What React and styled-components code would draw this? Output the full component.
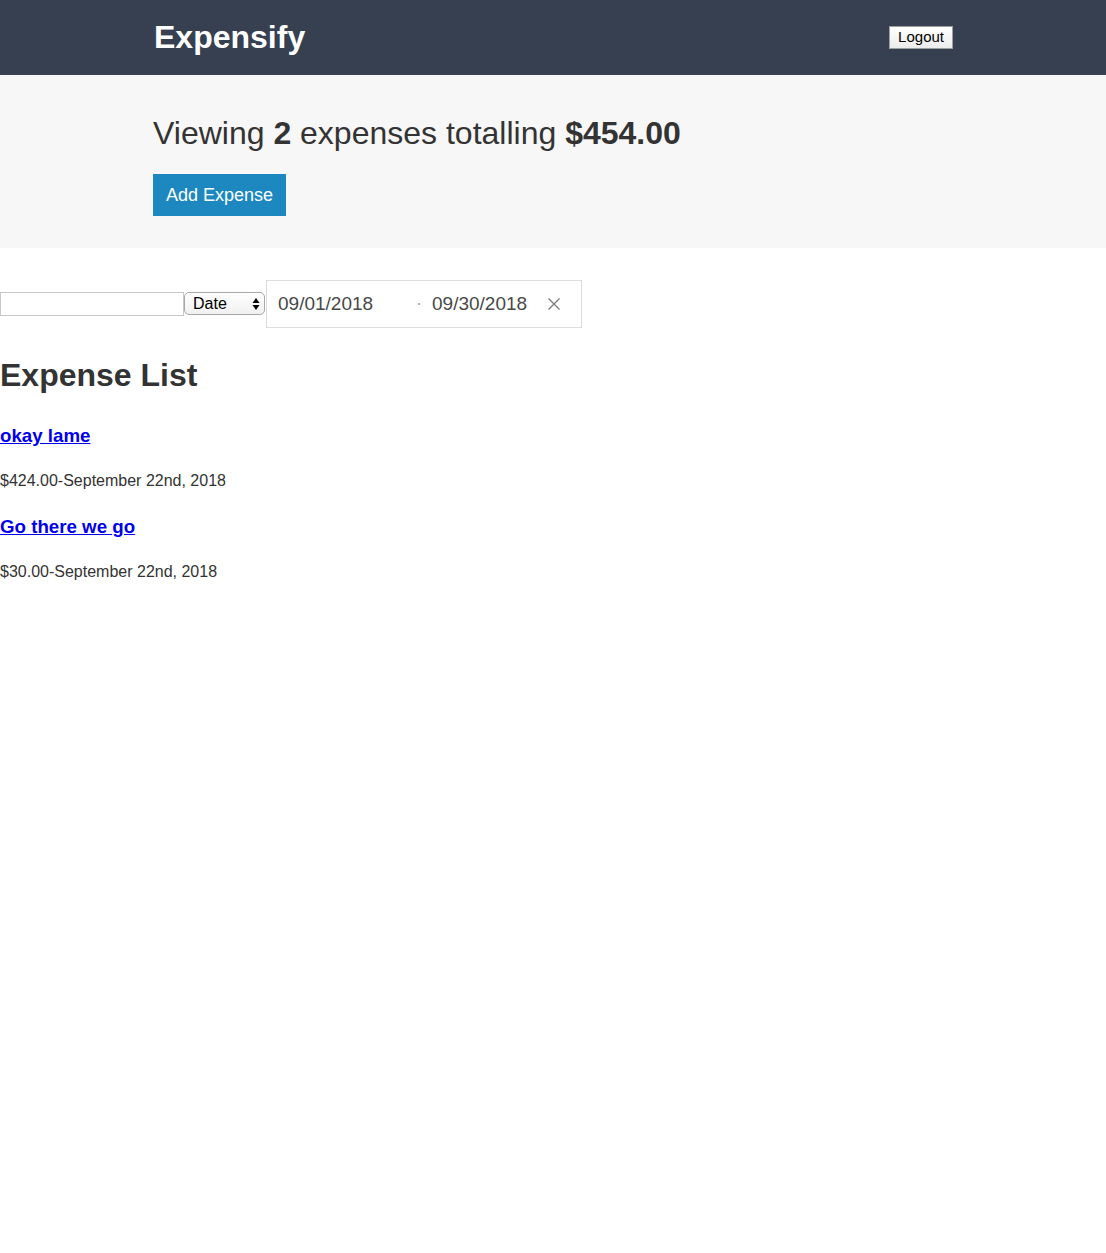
import React from 'react'
import styled, { createGlobalStyle } from 'styled-components'

const GlobalStyle = createGlobalStyle`
  body {
    margin: 0;
    font-family: "Liberation Sans", Arial, sans-serif;
    color: #333333;
    background: #ffffff;
  }
`

const Header = styled.header`
  background: #364051;
`
const Content = styled.div`
  max-width: 800px;
  margin: 0 auto;
`
const HeaderBar = styled(Content)`
  height: 75px;
  display: flex;
  align-items: center;
  justify-content: space-between;
`
const Logo = styled.h1`
  margin: 0 0 0 1px;
  color: #ffffff;
  font-size: 32px;
  font-weight: 700;
  letter-spacing: 0;
`
const LogoutButton = styled.button`
  font-family: "Liberation Sans", Arial, sans-serif;
  font-size: 15px;
  color: #000;
  height: 23px;
  padding: 0 8px 1px;
  border: 1px solid #a0a0a0;
  border-radius: 0;
  background: linear-gradient(#ffffff, #ececec);
  margin-top: -1px;
`

const PageHeader = styled.section`
  background: #f7f7f7;
  padding: 40px 0 32px;
`
const Title = styled.h1`
  margin: 0 0 22px;
  font-size: 32px;
  font-weight: 400;
  line-height: 37px;
  color: #333;
  b {
    font-weight: 700;
  }
`
const PrimaryButton = styled.button`
  font-family: "Liberation Sans", Arial, sans-serif;
  background: #1c88bf;
  color: #ffffff;
  border: none;
  height: 42px;
  padding: 0 13px;
  font-size: 18px;
  display: block;
`

const Filters = styled.div`
  display: flex;
  align-items: center;
  margin-top: 32px;
`
const TextInput = styled.input`
  box-sizing: border-box;
  width: 184px;
  height: 24px;
  margin: -1px 0 0;
  border: 1px solid #c9c9c9;
  padding: 0 4px;
  font-family: "Liberation Sans", Arial, sans-serif;
  font-size: 15px;
`
const Select = styled.select`
  appearance: none;
  box-sizing: border-box;
  width: 81px;
  height: 23px;
  border: 1px solid #a8a8a8;
  border-radius: 5px;
  padding: 0 0 1px 8px;
  margin: -1px 0 0;
  font-family: "Liberation Sans", Arial, sans-serif;
  font-size: 16px;
  color: #000;
  background: url("data:image/svg+xml;utf8,<svg xmlns='http://www.w3.org/2000/svg' width='8' height='14'><path d='M4 1 L7.5 6 H0.5 Z M4 13 L7.5 8 H0.5 Z' fill='black'/></svg>") no-repeat right 4px center,
    linear-gradient(#ffffff, #f0f0f0);
`
const DateRange = styled.div`
  box-sizing: border-box;
  height: 48px;
  width: 316px;
  margin-left: 1px;
  border: 1px solid #dbdbdb;
  background: #fff;
  display: flex;
  align-items: center;
`
const DateInput = styled.div`
  box-sizing: border-box;
  width: ${p => p.$width}px;
  padding: 0 11px;
  font-size: 19px;
  color: #484848;
`
const Separator = styled.div`
  width: 24px;
  display: flex;
  justify-content: flex-end;
  span {
    width: 2px;
    height: 2px;
    margin-right: 1px;
    border-radius: 1px;
    background: #9a9a9a;
  }
`
const ClearButton = styled.button`
  border: none;
  background: none;
  padding: 0;
  margin-left: 0;
  display: flex;
  color: #777;
`

const ListTitle = styled.h1`
  margin: 29px 0 31px;
  font-size: 32px;
  line-height: 37px;
  font-weight: 700;
`
const ItemTitle = styled.h3`
  margin: 0 0 25px;
  font-size: 18.72px;
  line-height: 22px;
  a {
    color: #0000ee;
  }
`
const ItemMeta = styled.p`
  margin: 0 0 26px;
  font-size: 16px;
  line-height: 18px;
  color: #333;
`

const expenses = [
  { id: 1, description: 'okay lame', amount: '$424.00', date: 'September 22nd, 2018' },
  { id: 2, description: 'Go there we go', amount: '$30.00', date: 'September 22nd, 2018' }
]

const App = () => {
  return (
    <>
      <GlobalStyle />
      <Header>
        <HeaderBar>
          <Logo>Expensify</Logo>
          <LogoutButton>Logout</LogoutButton>
        </HeaderBar>
      </Header>
      <PageHeader>
        <Content>
          <Title>
            Viewing <b>2</b> expenses totalling <b>$454.00</b>
          </Title>
          <PrimaryButton>Add Expense</PrimaryButton>
        </Content>
      </PageHeader>
      <Filters>
        <TextInput type="text" defaultValue="" />
        <Select defaultValue="date">
          <option value="date">Date</option>
          <option value="amount">Amount</option>
        </Select>
        <DateRange>
          <DateInput $width={130}>09/01/2018</DateInput>
          <Separator><span /></Separator>
          <DateInput $width={127}>09/30/2018</DateInput>
          <ClearButton>
            <svg width="12" height="12" viewBox="0 0 12 12">
              <path d="M0.5 0.5 L11.5 11.5 M11.5 0.5 L0.5 11.5" stroke="#7a7a7a" strokeWidth="1.3" />
            </svg>
          </ClearButton>
        </DateRange>
      </Filters>
      <ListTitle>Expense List</ListTitle>
      {expenses.map(expense => (
        <div key={expense.id}>
          <ItemTitle>
            <a href="#">{expense.description}</a>
          </ItemTitle>
          <ItemMeta>
            {expense.amount}-{expense.date}
          </ItemMeta>
        </div>
      ))}
    </>
  )
}

export default App
